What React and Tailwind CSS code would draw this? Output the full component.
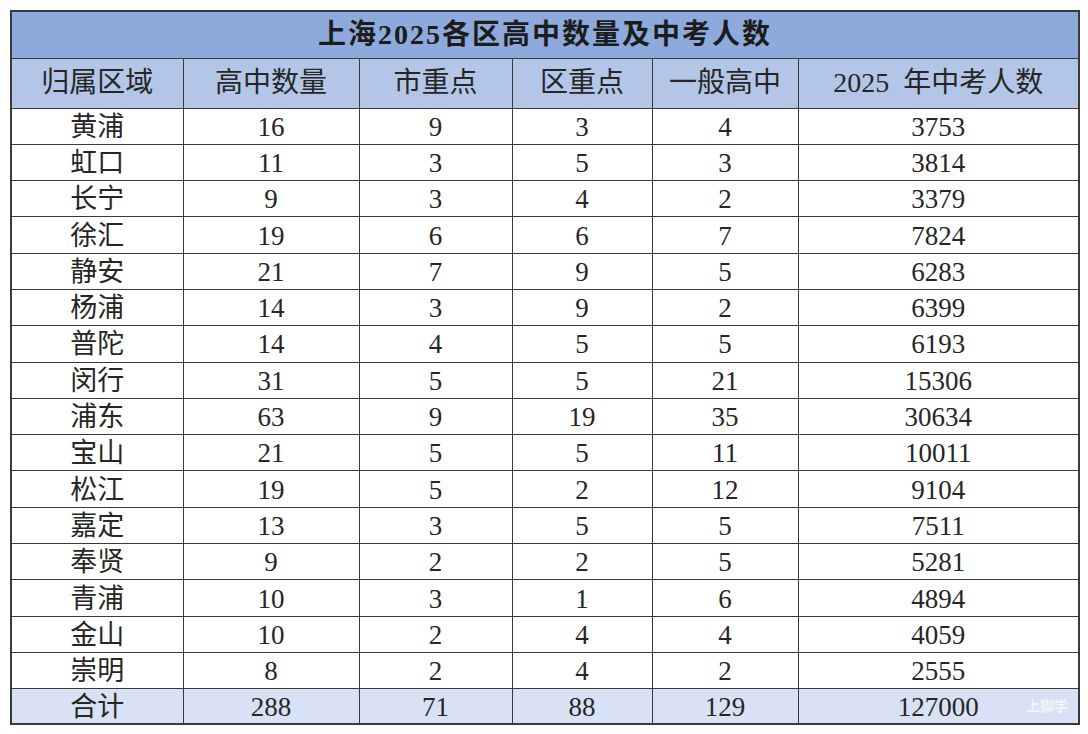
const rows = [
  ["黄浦", 16, 9, 3, 4, 3753],
  ["虹口", 11, 3, 5, 3, 3814],
  ["长宁", 9, 3, 4, 2, 3379],
  ["徐汇", 19, 6, 6, 7, 7824],
  ["静安", 21, 7, 9, 5, 6283],
  ["杨浦", 14, 3, 9, 2, 6399],
  ["普陀", 14, 4, 5, 5, 6193],
  ["闵行", 31, 5, 5, 21, 15306],
  ["浦东", 63, 9, 19, 35, 30634],
  ["宝山", 21, 5, 5, 11, 10011],
  ["松江", 19, 5, 2, 12, 9104],
  ["嘉定", 13, 3, 5, 5, 7511],
  ["奉贤", 9, 2, 2, 5, 5281],
  ["青浦", 10, 3, 1, 6, 4894],
  ["金山", 10, 2, 4, 4, 4059],
  ["崇明", 8, 2, 4, 2, 2555],
]

const headers = ["归属区域", "高中数量", "市重点", "区重点", "一般高中", "2025\u00a0 年中考人数"]

const App = () => {
  return (
    <div className="min-h-screen bg-white p-[10px] font-['Liberation_Serif','Noto_Sans_CJK_SC',serif] text-[#262626]">
      <div className="relative w-[1068px]">
        <table className="w-full table-fixed border-collapse border-2 border-[#3a3a3a]">
          <colgroup>
            <col className="w-[172px]" />
            <col className="w-[176px]" />
            <col className="w-[153px]" />
            <col className="w-[140px]" />
            <col className="w-[146px]" />
            <col className="w-[281px]" />
          </colgroup>
          <thead>
            {/* Title */}
            <tr className="h-[47px] bg-[#8eaadc]">
              <th colSpan={6} className="border border-[#3a3a3a] text-[28px] font-semibold tracking-[2px] text-[#1c1c1c] leading-none">
                上海2025各区高中数量及中考人数
              </th>
            </tr>
            {/* Column headers */}
            <tr className="h-[50px] bg-[#b4c6e7]">
              {headers.map((h) => (
                <th key={h} className="border border-[#3a3a3a] text-[28px] font-normal leading-none">
                  {h}
                </th>
              ))}
            </tr>
          </thead>
          <tbody>
            {rows.map((r) => (
              <tr key={r[0]} className="h-[36.3px] bg-white">
                {r.map((c, i) => (
                  <td key={i} className="border border-[#3a3a3a] text-center text-[27px] leading-none pt-[2px]">
                    {c}
                  </td>
                ))}
              </tr>
            ))}
            {/* Total */}
            <tr className="h-[35px] bg-[#d9e1f4]">
              {["合计", 288, 71, 88, 129, 127000].map((c, i) => (
                <td key={i} className="border border-[#3a3a3a] text-center text-[27px] leading-none pt-[2px]">
                  {c}
                </td>
              ))}
            </tr>
          </tbody>
        </table>
        <span className="absolute right-[10px] bottom-[9px] font-['Noto_Sans_CJK_SC',sans-serif] text-[14px] font-bold text-white/70">
          上脚学
        </span>
      </div>
    </div>
  )
}

export default App
